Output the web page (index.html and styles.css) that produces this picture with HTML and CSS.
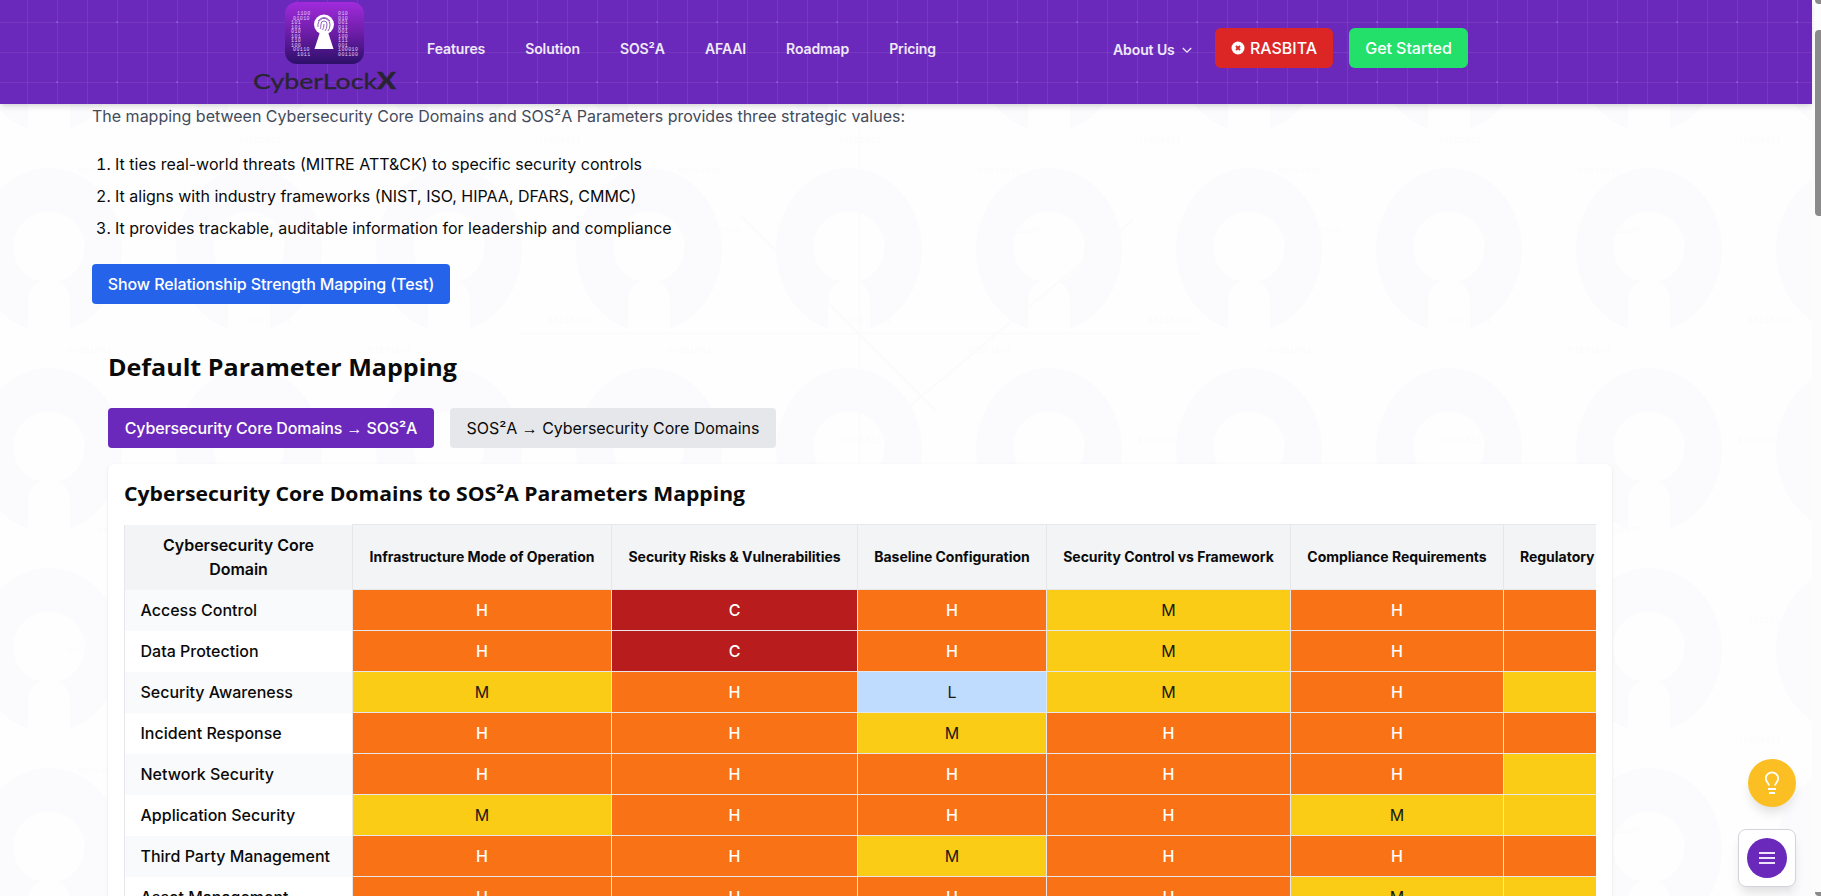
FILE: index.html
```
<!DOCTYPE html>
<html lang="en">
<head>
<meta charset="utf-8">
<title>CyberLockX</title>
<link rel="stylesheet" href="styles.css">
</head>
<body>
<svg class="backdrop" width="1813" height="896" aria-hidden="true">
  <defs>
    <pattern id="keyholes" x="-51" y="148" width="200" height="200" patternUnits="userSpaceOnUse">
      <ellipse cx="100" cy="102" rx="73" ry="82" fill="#fbfbfe"/>
      <circle cx="100" cy="99" r="36" fill="#fefefe"/>
      <path d="M79 182V153C79 138 88 132 100 132S121 138 121 153V190H79Z" fill="#fefefe"/>
    </pattern>
    <pattern id="bits" x="0" y="30" width="300" height="300" patternUnits="userSpaceOnUse">
      <text x="238" y="113">10101011</text><text x="78" y="143">01011010</text>
      <text x="98" y="203">00110100</text>
      <text x="248" y="293">10110101</text><text x="68" y="23">01001001</text>
    </pattern>
  </defs>
  <rect width="100%" height="100%" fill="url(#keyholes)"/>
  <rect width="100%" height="100%" fill="url(#bits)"/>
  <g fill="none" stroke="#fbfbfc" stroke-width="2"><path d="M859.500 110V896M520 333.500H1200M740 215L935 410M1133 220L905 410"/></g>
</svg>

<header class="topbar">
  <a class="brand">
    <svg width="80" height="62" viewBox="0 0 80 62">
      <defs><linearGradient id="badge" x2="0" y2="1"><stop stop-color="#a12bdc"/><stop offset=".5" stop-color="#6d1da7"/><stop offset="1" stop-color="#2d1069"/></linearGradient></defs>
      <rect width="79" height="62" rx="12" fill="url(#badge)"/>
      <g class="code">
        <text x="12" y="13">1100</text><text x="8" y="17.500">01010</text><text x="6" y="22">101</text><text x="6" y="26.500">101</text><text x="6" y="31">010</text><text x="6" y="35.500">101</text><text x="6" y="40">110</text><text x="6" y="44.500">100</text><text x="8" y="49">00110</text><text x="12" y="53.500">1011</text>
        <text x="53" y="13">010</text><text x="53" y="17.500">010</text><text x="53" y="22">001</text><text x="53" y="26.500">011</text><text x="53" y="31">001</text><text x="53" y="35.500">100</text><text x="53" y="40">111</text><text x="53" y="44.500">001</text><text x="53" y="49">100010</text><text x="53" y="53.500">001100</text>
      </g>
      <circle cx="39" cy="22.500" r="10" fill="#fff"/><path d="M35 30L29.500 47H48.500L43 30Z" fill="#fff"/>
      <g fill="none" stroke="#7a35ad" stroke-width=".8"><path d="M33 25a6 7 0 0 1 12-3q0 5-2 7M35 27q1-1 1-5a3 3 0 0 1 6 0q0 5-2 7M37.500 28q1.500-2 1.500-6M33 19q6-7 12 0"/></g>
    </svg>
    <svg class="wordmark" width="146" height="32" viewBox="0 0 146 32">
      <text x="0" y="21" textLength="124" lengthAdjust="spacingAndGlyphs">CyberLock</text>
      <text class="bold" x="124" y="21" textLength="19" lengthAdjust="spacingAndGlyphs">X</text>
    </svg>
  </a>
  <nav class="links"><a>Features</a><a>Solution</a><a>SOS²A</a><a>AFAAI</a><a>Roadmap</a><a>Pricing</a></nav>
  <div class="actions">
    <a class="about">About Us <svg width="12" height="12" viewBox="0 0 12 12"><path d="M1.800 4L6 8.200 10.200 4" fill="none" stroke="currentColor" stroke-width="1.300"/></svg></a>
    <a class="btn red"><svg width="14" height="14" viewBox="0 0 14 14"><circle cx="7" cy="7" r="6.500" fill="#fff"/><path d="M5 5L9 9M9 5L5 9" stroke="#dc2626" stroke-width="1.800"/></svg>RASBITA</a>
    <a class="btn green">Get Started</a>
  </div>
</header>

<main>
  <p class="intro">The mapping between Cybersecurity Core Domains and SOS²A Parameters provides three strategic values:</p>
  <ol>
    <li>It ties real-world threats (MITRE ATT&amp;CK) to specific security controls</li>
    <li>It aligns with industry frameworks (NIST, ISO, HIPAA, DFARS, CMMC)</li>
    <li>It provides trackable, auditable information for leadership and compliance</li>
  </ol>
  <button class="blue">Show Relationship Strength Mapping (Test)</button>
  <section>
    <h2><svg width="352" height="32"><text x="0" y="24" textLength="349" lengthAdjust="spacingAndGlyphs">Default Parameter Mapping</text></svg></h2>
    <div class="tabs"><button class="active">Cybersecurity Core Domains <span>→</span> SOS²A</button><button>SOS²A <span>→</span> Cybersecurity Core Domains</button></div>
    <div class="card">
      <h3><svg width="624" height="28"><text x="0" y="21" textLength="621" lengthAdjust="spacingAndGlyphs">Cybersecurity Core Domains to SOS²A Parameters Mapping</text></svg></h3>
      <div class="scroller">
        <table>
          <colgroup><col class="c0"><col class="c1"><col class="c2"><col class="c3"><col class="c4"><col class="c5"><col class="c6"></colgroup>
          <thead><tr><th>Cybersecurity Core Domain</th><th>Infrastructure Mode of Operation</th><th>Security Risks &amp; Vulnerabilities</th><th>Baseline Configuration</th><th>Security Control vs Framework</th><th>Compliance Requirements</th><th>Regulatory Requirements</th></tr></thead>
          <tbody>
            <tr><td>Access Control</td><td class="h">H</td><td class="c">C</td><td class="h">H</td><td class="m">M</td><td class="h">H</td><td class="h"></td></tr>
            <tr><td>Data Protection</td><td class="h">H</td><td class="c">C</td><td class="h">H</td><td class="m">M</td><td class="h">H</td><td class="h"></td></tr>
            <tr><td>Security Awareness</td><td class="m">M</td><td class="h">H</td><td class="l">L</td><td class="m">M</td><td class="h">H</td><td class="m"></td></tr>
            <tr><td>Incident Response</td><td class="h">H</td><td class="h">H</td><td class="m">M</td><td class="h">H</td><td class="h">H</td><td class="h"></td></tr>
            <tr><td>Network Security</td><td class="h">H</td><td class="h">H</td><td class="h">H</td><td class="h">H</td><td class="h">H</td><td class="m"></td></tr>
            <tr><td>Application Security</td><td class="m">M</td><td class="h">H</td><td class="h">H</td><td class="h">H</td><td class="m">M</td><td class="m"></td></tr>
            <tr><td>Third Party Management</td><td class="h">H</td><td class="h">H</td><td class="m">M</td><td class="h">H</td><td class="h">H</td><td class="h"></td></tr>
            <tr><td>Asset Management</td><td class="h">H</td><td class="h">H</td><td class="h">H</td><td class="h">H</td><td class="m">M</td><td class="m"></td></tr>
          </tbody>
        </table>
      </div>
    </div>
  </section>
</main>

<div class="float">
  <button class="tip"><svg width="24" height="24" viewBox="0 0 24 24" fill="none" stroke="#fff" stroke-width="1.800"><path d="M9 14.500C9 12.500 5.800 11 5.800 7.500a6.200 6.200 0 0 1 12.400 0C18.200 11 15 12.500 15 14.500M8 18H16M9 22H15"/></svg></button>
  <div class="menu"><button><svg width="16" height="14" viewBox="0 0 16 14"><path d="M0 2H16M0 7H16M0 12H16" stroke="#eee3fa" stroke-width="2"/></svg></button></div>
</div>
<div class="scrollbar"><b></b><i></i><b></b></div>
</body>
</html>
```
FILE: styles.css
```
* { box-sizing: border-box; }
html { height: 896px; overflow: hidden; }
body { margin: 0; height: 896px; overflow: hidden; background: #fefefe; color: #0a0a0a; font: 16px/24px Inter, sans-serif; }
button { border: 0; margin: 0; font: inherit; color: inherit; padding: 8px 16px; border-radius: 4px; height: 40px; white-space: nowrap; }
.backdrop { position: absolute; left: 0; top: 0; z-index: -1; }
.backdrop text { font: 9px "Liberation Mono", monospace; fill: #fbfbfc; }

.topbar {
  position: relative; z-index: 2; width: 1812px; height: 104px; padding-left: 253px;
  display: flex; align-items: flex-start;
  background-color: #6b29bb;
  background-image:
    radial-gradient(circle at 1px 1px, #ffffff24 1px, transparent 1.500px),
    linear-gradient(#ffffff12 1px, transparent 1px),
    linear-gradient(90deg, #ffffff12 1px, transparent 1px);
  background-size: 60px 60px, 30px 30px, 30px 30px;
  background-position: 56px 21px, 0 22px, 27px 0;
  box-shadow: 0 4px 6px -1px #0000001a, 0 2px 4px -2px #0000001a;
}
.brand { width: 146px; height: 104px; padding-top: 2px; display: flex; flex-direction: column; align-items: center; }
.brand > svg:first-child { margin-right: 3px; flex: none; }
.code text { font: 5px "Liberation Mono", monospace; fill: #e3c9f4; letter-spacing: .4px; }
.wordmark { margin-top: 4px; flex: none; }
.wordmark text { font: 22px Lato, sans-serif; fill: #292431; stroke: #292431; stroke-width: .3; }
.wordmark .bold { font-weight: 900; }
.links { display: flex; gap: 40px; width: 508px; margin: 37px 0 0 28px; font-size: 14px; font-weight: 600; color: #f0e9f8; letter-spacing: -.1px; }
.actions { display: flex; margin-left: 178px; padding-top: 28px; }
.about { display: flex; align-items: center; gap: 6px; width: 102px; font-size: 14px; font-weight: 600; color: #f0e9f8; height: 44px; letter-spacing: -.1px; }
.btn { height: 40px; border-radius: 6px; color: #fff; font-weight: 500; display: flex; align-items: center; justify-content: center; gap: 5px; letter-spacing: -.05px; }
.red { width: 118px; margin-right: 16px; background: #dc2626; }
.green { width: 119px; background: #22e06a; }

main { padding: 0 0 0 92px; height: 792px; overflow: hidden; }
.intro { margin: 0; color: #434b5a; }
ol { margin: 24px 0; padding-left: 23px; }
li { margin-bottom: 8px; }
.blue { background: #2563eb; color: #fff; font-weight: 500; width: 358px; padding: 8px 0; letter-spacing: -.1px; }
section { margin: 48px 0 0 16px; width: 1504px; }
h2, h3 { margin: 0; }
h2 svg, h3 svg { display: block; }
h2 text { font: 700 24px "Open Sans", sans-serif; fill: #0a0a0a; }
h3 text { font: 700 20px "Open Sans", sans-serif; fill: #0a0a0a; }
.tabs { display: flex; gap: 16px; margin: 24px 0 16px; }
.tabs button { background: #e5e7eb; width: 326px; padding: 8px 0; letter-spacing: -.04px; }
.tabs .active { background: #6b29bb; color: #fff; font-weight: 500; letter-spacing: -.12px; }
.tabs span { font: 16px/1 "Liberation Sans", sans-serif; }
.card { background: #fff; border-radius: 6px; padding: 16px; height: 500px; box-shadow: 0 1px 3px #0000001a; }
.scroller { margin-top: 16px; overflow: hidden; }
table { border-collapse: collapse; table-layout: fixed; width: 1585px; }
.c0 { width: 228px; } .c1 { width: 259px; } .c2 { width: 246px; } .c3 { width: 189px; } .c4 { width: 244px; } .c5 { width: 213px; } .c6 { width: 206px; }
th, td { border: 1px solid #e5e7eb; text-align: center; padding: 8px 16px; }
th { background: #f3f4f6; height: 65px; padding: 8px 0; font-size: 14px; font-weight: 700; letter-spacing: -.03px; white-space: nowrap; }
th:first-child { font-size: 16px; font-weight: 600; white-space: normal; padding: 8px 16px; border-top: 0; border-bottom: 0; }
th:last-child { text-align: left; padding-left: 16px; }
td { height: 41px; color: #fff; font-weight: 500; }
td:first-child { color: #0a0a0a; text-align: left; padding: 8px 0 8px 15.500px; white-space: nowrap; border-top: 0; border-bottom: 0; }
tr:nth-child(odd) td:first-child { background: #f9fafb; }
.h { background: #f97316; } .c { background: #b91c1c; } .m { background: #facc15; color: #1c1917; } .l { background: #bfdbfe; color: #1c1917; }
td.m, td.l { font-weight: 400; }

.float { position: absolute; z-index: 3; right: 25px; top: 759px; display: flex; flex-direction: column; align-items: flex-end; gap: 22px; }
.float button { display: flex; align-items: center; justify-content: center; padding: 0; border-radius: 50%; }
.float .tip { width: 48px; height: 48px; background: #fbbf24; box-shadow: 0 8px 12px -3px #0002; }
.menu { width: 58px; height: 58px; border: 1px solid #d1d5db; border-radius: 8px; background: #fff; display: grid; place-items: center; box-shadow: 0 8px 12px -3px #0002; }
.menu button { width: 40px; height: 40px; background: #6b29bb; }
.scrollbar { position: absolute; right: 0; top: 0; width: 9px; height: 896px; padding-left: 3px; background: #fcfcfc; display: flex; flex-direction: column; }
.scrollbar i { margin: 26px 0 auto; height: 186px; background: #8b8b8b; border-radius: 4px 0 0 4px; }
.scrollbar b { height: 4px; background: #8b8b8b; border-radius: 0 0 0 4px; }
```
